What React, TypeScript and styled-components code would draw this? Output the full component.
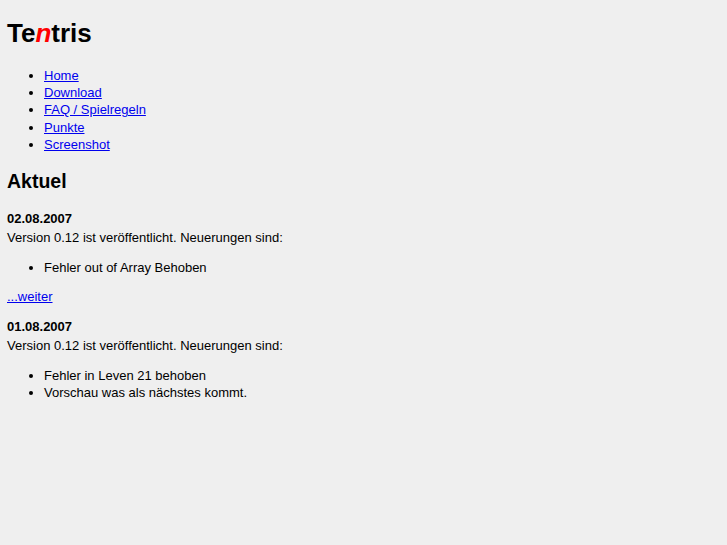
import React from 'react';
import styled, { createGlobalStyle } from 'styled-components';

const GlobalStyle = createGlobalStyle`
  html, body {
    margin: 0;
    background: #efefef;
  }
  body {
    font-family: "Liberation Sans", Arial, Helvetica, sans-serif;
    font-size: 13px;
    line-height: 1.333;
    color: #000;
  }
`;

const Page = styled.div`
  padding: 0 7px;
  overflow: hidden;
`;

const Title = styled.h1`
  font-size: 26px;
  line-height: 1.15;
  font-weight: bold;
  margin: 19.4px 0 17.4px;
`;

const Accent = styled.span`
  color: #ff0000;
  font-style: italic;
`;

const List = styled.ul<{ gap?: string }>`
  margin: ${(props) => props.gap || '13px'} 0;
  padding-left: 37px;
  list-style: disc;
`;

const Link = styled.a`
  color: #0000ee;
  text-decoration: underline;
`;

const Heading = styled.h2`
  font-size: 19.5px;
  font-weight: bold;
  margin: 15.2px 0 16px;
`;

const Para = styled.p`
  margin: 12px 0;
  line-height: 1.4;
`;

type NewsItem = {
  date: string;
  text: string;
  points: string[];
  more?: boolean;
};

const nav = ['Home', 'Download', 'FAQ / Spielregeln', 'Punkte', 'Screenshot'];

const news: NewsItem[] = [
  {
    date: '02.08.2007',
    text: 'Version 0.12 ist veröffentlicht. Neuerungen sind:',
    points: ['Fehler out of Array Behoben'],
    more: true,
  },
  {
    date: '01.08.2007',
    text: 'Version 0.12 ist veröffentlicht. Neuerungen sind:',
    points: ['Fehler in Leven 21 behoben', 'Vorschau was als nächstes kommt.'],
  },
];

const News: React.FC<NewsItem> = ({ date, text, points, more }) => (
  <>
    <Para>
      <b>{date}</b>
      <br />
      {text}
    </Para>
    <List gap="12px">
      {points.map((p) => (
        <li key={p}>{p}</li>
      ))}
    </List>
    {more ? (
      <Para>
        <Link href="#">...weiter</Link>
      </Para>
    ) : null}
  </>
);

export default function App() {
  return (
    <Page>
      <GlobalStyle />
      <Title>
        Te<Accent>n</Accent>tris
      </Title>
      <List>
        {nav.map((n) => (
          <li key={n}>
            <Link href="#">{n}</Link>
          </li>
        ))}
      </List>
      <Heading>Aktuel</Heading>
      {news.map((n) => (
        <News key={n.date} {...n} />
      ))}
    </Page>
  );
}
